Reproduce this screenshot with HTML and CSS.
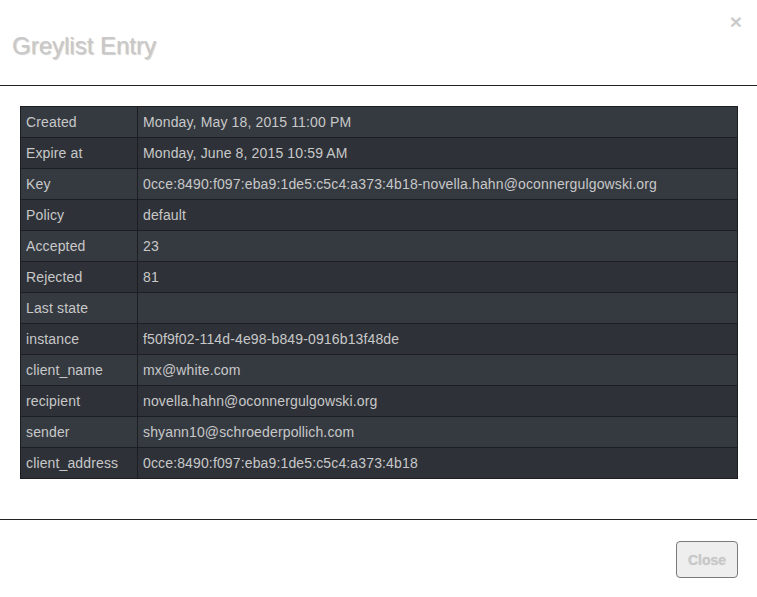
FILE: index.html
```html
<!DOCTYPE html>
<html>
<head>
<meta charset="utf-8">
<title>Greylist Entry</title>
<link rel="stylesheet" href="styles.css">
</head>
<body>
<div class="modal">
  <div class="modal-header">
    <h4 class="modal-title">Greylist Entry</h4>
    <button class="close" type="button">×</button>
  </div>
  <div class="modal-body">
    <table class="details">
      <tbody>
        <tr><td class="k">Created</td><td>Monday, May 18, 2015 11:00 PM</td></tr>
        <tr><td class="k">Expire at</td><td>Monday, June 8, 2015 10:59 AM</td></tr>
        <tr><td class="k">Key</td><td>0cce:8490:f097:eba9:1de5:c5c4:a373:4b18-novella.hahn@oconnergulgowski.org</td></tr>
        <tr><td class="k">Policy</td><td>default</td></tr>
        <tr><td class="k">Accepted</td><td>23</td></tr>
        <tr><td class="k">Rejected</td><td>81</td></tr>
        <tr><td class="k">Last state</td><td></td></tr>
        <tr><td class="k">instance</td><td>f50f9f02-114d-4e98-b849-0916b13f48de</td></tr>
        <tr><td class="k">client_name</td><td>mx@white.com</td></tr>
        <tr><td class="k">recipient</td><td>novella.hahn@oconnergulgowski.org</td></tr>
        <tr><td class="k">sender</td><td>shyann10@schroederpollich.com</td></tr>
        <tr><td class="k">client_address</td><td>0cce:8490:f097:eba9:1de5:c5c4:a373:4b18</td></tr>
      </tbody>
    </table>
  </div>
  <div class="modal-footer">
    <button class="btn" type="button">Close</button>
  </div>
</div>
</body>
</html>
```
FILE: styles.css
```css
* { box-sizing: border-box; }
html, body {
  margin: 0;
  padding: 0;
  background: #ffffff;
  font-family: "Liberation Sans", Arial, sans-serif;
  font-size: 14px;
}
.modal {
  width: 757px;
  min-height: 597px;
  background: #ffffff;
  border-radius: 6px;
  overflow: hidden;
}
.modal-header {
  position: relative;
  height: 86px;
  padding: 33px 12px 0 12px;
  border-bottom: 1px solid #222222;
}
.modal-title {
  margin: 0;
  font-size: 24px;
  font-weight: normal;
  line-height: 26px;
  color: #c8c8c8;
  text-shadow: 1px 1px 1px rgba(0,0,0,0.2);
}
.close {
  position: absolute;
  top: 11px;
  right: 15px;
  padding: 0;
  border: 0;
  background: transparent;
  font-family: "Liberation Sans", Arial, sans-serif;
  font-size: 21px;
  font-weight: bold;
  line-height: 21px;
  color: #cccccc;
  cursor: pointer;
}
.modal-body {
  padding: 20px;
}
.details {
  width: 718px;
  border-collapse: collapse;
  border: 1px solid #1c1e22;
  margin-bottom: 20px;
}
.details td {
  padding: 5px 5px;
  line-height: 20px;
  height: 31px;
  color: #c8c8c8;
  border: 1px solid #1c1e22;
  white-space: nowrap;
  letter-spacing: 0.14px;
  background: #2e3238;
}
.details tr:nth-child(odd) td {
  background: #353a41;
}
.details td.k {
  width: 117px;
}
.modal-footer {
  border-top: 1px solid #222222;
  padding: 21px 19px 20px 20px;
  display: flex;
  justify-content: flex-end;
}
.btn {
  width: 62px;
  height: 37px;
  border: 1px solid #7a7a7a;
  border-radius: 4px;
  background: #eeeeee;
  color: #c8c8c8;
  font-family: "Liberation Sans", Arial, sans-serif;
  font-size: 14px;
  font-weight: bold;
  text-shadow: 0 0 1px rgba(0,0,0,0.15);
  padding: 0;
}
```
